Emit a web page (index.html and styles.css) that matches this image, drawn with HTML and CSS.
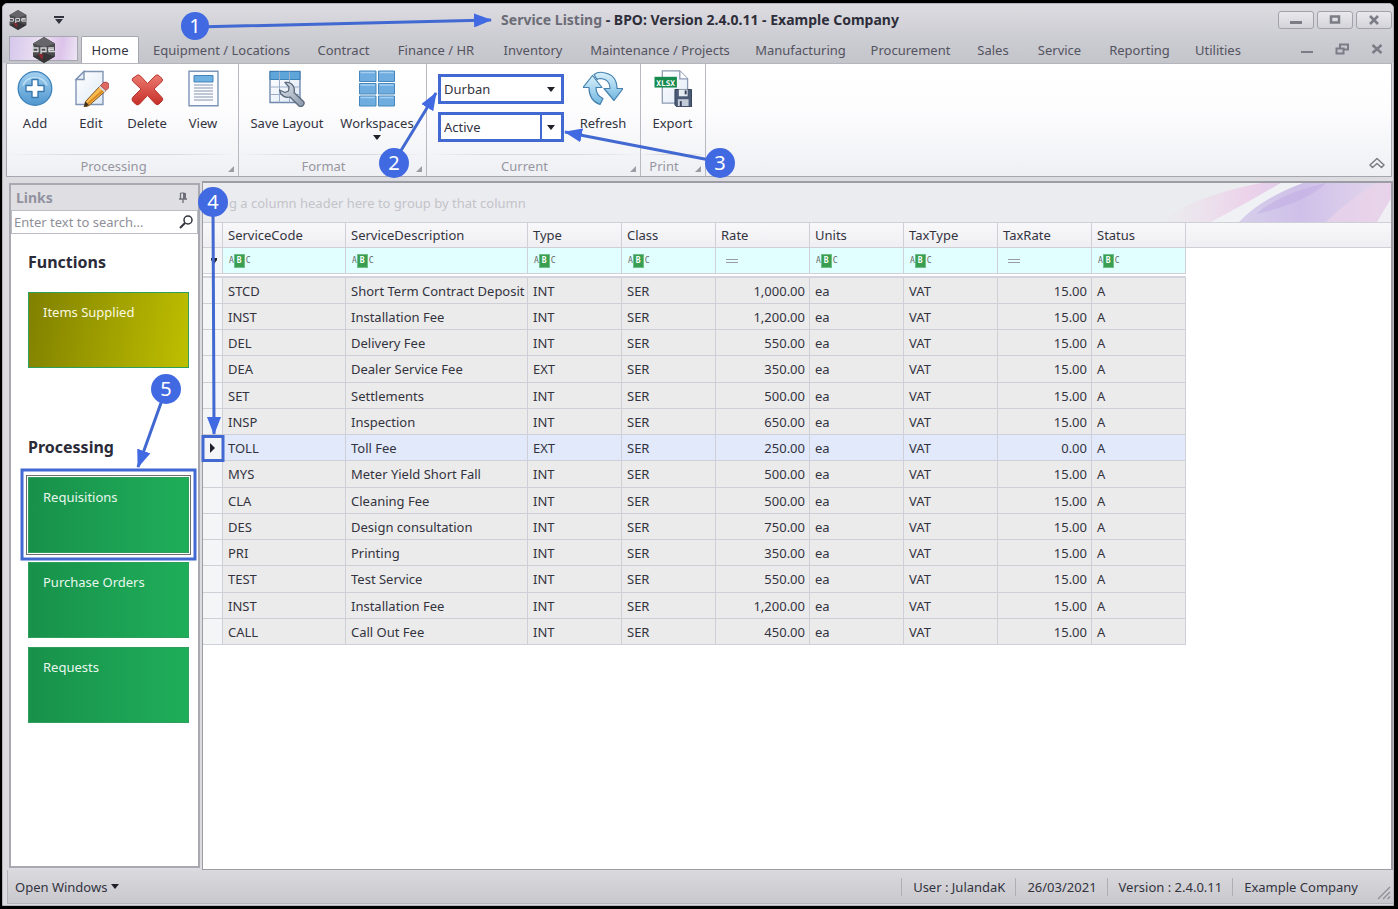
FILE: index.html
```html
<!DOCTYPE html>
<html lang="en">
<head>
<meta charset="utf-8">
<title>Service Listing - BPO</title>
<link rel="stylesheet" href="styles.css">
</head>
<body>
<svg class="defs" width="0" height="0" aria-hidden="true">
  <defs>
    <linearGradient id="blue" x1="0" y1="0" x2="0" y2="1"><stop offset="0" stop-color="#a3d0ef"/><stop offset="1" stop-color="#4f97cf"/></linearGradient>
    <linearGradient id="cyan" x1="0" y1="0" x2="0" y2="1"><stop offset="0" stop-color="#d9f0fb"/><stop offset="1" stop-color="#70b7e0"/></linearGradient>
    <linearGradient id="red" x1="0" y1="0" x2="0" y2="1"><stop offset="0" stop-color="#ec7a70"/><stop offset="1" stop-color="#c62f28"/></linearGradient>
    <linearGradient id="paper" x1="0" y1="0" x2="1" y2="1"><stop offset="0" stop-color="#ffffff"/><stop offset="1" stop-color="#dfe9f6"/></linearGradient>
    <linearGradient id="steel" x1="0" y1="0" x2="1" y2="1"><stop offset="0" stop-color="#e3e9ef"/><stop offset="1" stop-color="#8796a8"/></linearGradient>
    <symbol id="logo" viewBox="0 0 26 26">
      <path d="M13 0 24 6.500V19.500L13 26 2 19.500V6.500Z" fill="#4b4b4e"/>
      <path d="M13 0 24 6.500 13 10 2 6.500Z" fill="#66666a"/>
      <path d="M13 16 24 19.500 13 26 2 19.500Z" fill="#353538"/>
      <path d="M2 8.500v6M2 11h5v3.500H2M10 17v-6h5v3.500h-5M23 11h-5v3.500h6M17 12.700h6" fill="none" stroke="#d6d6da" stroke-width="1.300"/>
      <path d="M7 17l4 6 1.500-5.500z" fill="#8f2830"/>
    </symbol>
  </defs>
</svg>
<div class="window">
  <header class="titlebar">
    <div class="quick">
      <svg width="20" height="20"><use href="#logo"/></svg>
      <button class="plain" aria-label="Customize quick access"><svg width="10" height="8" viewBox="0 0 10 8"><path d="M0 0h10v2H0zM1 3h8L5 8z" fill="#33333f"/></svg></button>
    </div>
    <h1 class="title"><span>Service Listing</span> - BPO: Version 2.4.0.11 - Example Company</h1>
    <div class="caption-buttons">
      <button aria-label="Minimize"><svg width="12" height="10" viewBox="0 0 12 10"><path d="M0 6h12v3H0z" fill="#7c7c86"/></svg></button>
      <button aria-label="Maximize"><svg width="12" height="10" viewBox="0 0 12 10"><path d="M2 1.500h8v6H2z" fill="none" stroke="#7c7c86" stroke-width="2.500"/></svg></button>
      <button aria-label="Close"><svg width="12" height="10" viewBox="0 0 12 10"><path d="M2 1l8 8M10 1L2 9" stroke="#7c7c86" stroke-width="2.500"/></svg></button>
    </div>
  </header>

  <nav class="tabs">
    <button class="app-button" aria-label="Application menu"><svg width="26" height="26"><use href="#logo"/></svg></button>
    <div class="tab-list">
      <a class="tab active" href="#home">Home</a>
      <a class="tab" href="#equipment">Equipment / Locations</a>
      <a class="tab" href="#contract">Contract</a>
      <a class="tab" href="#finance">Finance / HR</a>
      <a class="tab" href="#inventory">Inventory</a>
      <a class="tab" href="#maintenance">Maintenance / Projects</a>
      <a class="tab" href="#manufacturing">Manufacturing</a>
      <a class="tab" href="#procurement">Procurement</a>
      <a class="tab" href="#sales">Sales</a>
      <a class="tab" href="#service">Service</a>
      <a class="tab" href="#reporting">Reporting</a>
      <a class="tab" href="#utilities">Utilities</a>
    </div>
    <div class="mdi-buttons">
      <button class="plain" aria-label="Minimize document"><svg width="14" height="12" viewBox="0 0 14 12"><path d="M1 8h12v2H1z" fill="#7c7c86"/></svg></button>
      <button class="plain" aria-label="Restore document"><svg width="14" height="12" viewBox="0 0 14 12"><path d="M5 5V1.500h8v5H9M1.500 5.500h7v5h-7z" fill="none" stroke="#7c7c86" stroke-width="2"/></svg></button>
      <button class="plain" aria-label="Close document"><svg width="14" height="12" viewBox="0 0 14 12"><path d="M2.500 2l9 8M11.500 2l-9 8" stroke="#7c7c86" stroke-width="2.500"/></svg></button>
    </div>
  </nav>

  <section class="ribbon">
    <div class="group processing">
      <div class="tools">
        <button class="tool"><svg width="36" height="36" viewBox="0 0 36 36"><circle cx="18" cy="18" r="16.800" fill="url(#blue)" stroke="#3f83bb" stroke-width="1.300"/><path d="M6 15a13 13 0 0 1 24 0" fill="none" stroke="#cdeafa" stroke-width="1.500" opacity=".7"/><path d="M15 9h6v6h6v6h-6v6h-6v-6H9v-6h6z" fill="#fff" stroke="#3778ae" stroke-width="1.400" stroke-linejoin="round"/></svg>Add</button>
        <button class="tool"><svg width="36" height="36" viewBox="0 0 36 36"><path d="M11 1h19v33H3V9z" fill="url(#paper)" stroke="#8095b4" stroke-width="1.400"/><path d="M11 1v8H3z" fill="#e8eff9" stroke="#8095b4" stroke-width="1.400"/><path d="M27.500 15 33 20 16 35 11 37 12.500 31z" fill="#f8bb4c" stroke="#80511c" stroke-width="1"/><path d="M31 19 15 33" fill="none" stroke="#d98722" stroke-width="1.800"/><path d="M12.500 31l3.500 3.500-5 2z" fill="#3b2f26"/><path d="M27.500 15l3-3q3-1.200 5 1 1.500 2 0 4.500L33 20z" fill="#df6a63" stroke="#a03a38" stroke-width=".8"/><path d="M26.500 16l5.500 5" stroke="#d5dae2" stroke-width="2"/></svg>Edit</button>
        <button class="tool"><svg width="36" height="36" viewBox="0 0 36 36"><path d="M8.500 4.500Q10 4 11.500 5.500L18.500 13 26 5.500q1.500-1.500 3-1l4 3.500q1 1.500 0 3L25 18.500l8 8.500q1.500 1.500 0 3.500l-3 3q-2 1.500-3.500 0L18.500 25l-8 8.500q-1.500 1.500-3.500.5l-3.500-3.500q-1-2 0-3.500l8.500-8.500L4 11q-1.500-1.500-.5-3z" fill="url(#red)" stroke="#b8332c"/></svg>Delete</button>
        <button class="tool"><svg width="36" height="36" viewBox="0 0 36 36"><path d="M4 0.700h29v34.600H4z" fill="#fafcff" stroke="#7e94b6" stroke-width="1.400"/><path d="M9 5h19v6.500H9z" fill="#6fb2e2" stroke="#4484b8"/><path d="M9 14.500h19M9 17.500h19M9 20.500h19M9 23.500h19M9 26.500h19M9 29.500h19" stroke="#8593ab" stroke-width="1.200"/></svg>View</button>
      </div>
      <div class="group-name">Processing</div>
    </div>
    <div class="group format">
      <div class="tools">
        <button class="tool wide"><svg width="36" height="36" viewBox="0 0 36 36"><path d="M1 1h30v31H1z" fill="url(#paper)" stroke="#7088ac" stroke-width="1.400"/><path d="M1 1h30v8H1z" fill="#5ea5da" stroke="#3d7fb7"/><path d="M10.500 1v31M20.500 1v31M1 16.500h30M1 24h30" stroke="#9badc8"/><path d="M16 12q6-1 8.500 4 1.500 3 .5 6l9.500 9q1.500 2-.5 4t-4 .5L21 26.500q-5 1.500-9-3l-1.500-4 5.500 2.500 3.500-1.500.5-4z" fill="url(#steel)" stroke="#59687b" stroke-width="1.300" stroke-linejoin="round"/></svg>Save Layout</button>
        <button class="tool medium"><svg width="36" height="36" viewBox="0 0 36 36"><path d="M.5.500h16.500v10.500H.5zM19.500.500h16v10.500h-16zM.5 13h16.500v10.500H.5zM19.500 13h16v10.500h-16zM.5 25.500h16.500v10H.5zM19.500 25.500h16v10h-16z" fill="#6fade0" stroke="#4688bd"/><path d="M1.500 2h14.500M20.500 2h14M1.500 14.500h14.500M20.500 14.500h14M1.500 27h14.500M20.500 27h14" stroke="#a5d0f0" stroke-width="1.500"/></svg>Workspaces<svg class="drop" width="8" height="5" viewBox="0 0 8 5"><path d="M0 0h8L4 5z" fill="#20202c"/></svg></button>
      </div>
      <div class="group-name">Format</div>
    </div>
    <div class="group current">
      <div class="tools">
        <div class="combos">
          <label class="combo"><select aria-label="Site"><option>Durban</option></select><svg width="8" height="5" viewBox="0 0 8 5"><path d="M0 0h8L4 5z" fill="#20202c"/></svg></label>
          <label class="combo split"><select aria-label="Status"><option>Active</option></select><svg width="8" height="5" viewBox="0 0 8 5"><path d="M0 0h8L4 5z" fill="#20202c"/></svg></label>
        </div>
        <button class="tool refresh"><svg width="40" height="36" viewBox="0 0 40 36"><path d="M6 17H0L9.500 5 19 17h-6q0 8 7 11l-3 6Q6 30 6 17z" fill="url(#cyan)" stroke="#4581ae" stroke-width="1.200" stroke-linejoin="round"/><path d="M34 18h6l-9 12-10-12h6q0-9-9-10-3 0-4 1l-3-5q4-3 9-2 14 2 14 16z" fill="url(#cyan)" stroke="#4581ae" stroke-width="1.200" stroke-linejoin="round"/></svg>Refresh</button>
      </div>
      <div class="group-name">Current</div>
    </div>
    <div class="group print">
      <div class="tools">
        <button class="tool"><svg width="40" height="38" viewBox="0 0 40 38"><path d="M9 1h18l8 8v25H9z" fill="url(#paper)" stroke="#8b9ab3" stroke-width="1.300"/><path d="M27 1v8h8" fill="#fff" stroke="#8b9ab3" stroke-width="1.300"/><path d="M1 7h23v11H1z" fill="#178a4e"/><text x="12.500" y="16" text-anchor="middle" class="xlsx">XLSX</text><path d="M22 20h17v18H24l-2-2z" fill="#4b5a75" stroke="#35425a"/><path d="M26 20h9v7h-9z" fill="#e7ebf2"/><path d="M32 21h2v4h-2z" fill="#35425a"/><path d="M25 30h11v7H25z" fill="#c5ccd9"/><path d="M27 32h2v5h-2z" fill="#35425a"/></svg>Export</button>
      </div>
      <div class="group-name">Print</div>
    </div>
    <button class="plain collapse" aria-label="Collapse ribbon"><svg width="16" height="12" viewBox="0 0 16 12"><path d="M1 8l7-6.500L15 8l-2.500 2.500L8 6.500l-4.500 4z" fill="none" stroke="#7c7c86" stroke-width="1.500" stroke-linejoin="round"/></svg></button>
  </section>

  <div class="workspace">
    <aside class="links">
      <div class="links-head"><h2>Links</h2><button class="plain" aria-label="Pin panel"><svg width="10" height="12" viewBox="0 0 10 12"><path d="M2.500 1v6M1 7h8M5 7v4" fill="none" stroke="#6e6e78" stroke-width="1.300"/><path d="M2.500 1h4v6" fill="none" stroke="#6e6e78"/><path d="M5 1h3v6H5z" fill="#6e6e78"/></svg></button></div>
      <div class="search"><input type="text" placeholder="Enter text to search..." aria-label="Search links"><svg width="14" height="14" viewBox="0 0 14 14"><circle cx="9" cy="5" r="4" fill="none" stroke="#33333f" stroke-width="1.500"/><path d="M6 8l-5 5" stroke="#33333f" stroke-width="2"/></svg></div>
      <div class="links-body">
        <h3>Functions</h3>
        <button class="tile olive">Items Supplied</button>
        <h3 class="second">Processing</h3>
        <button class="tile focused">Requisitions</button>
        <button class="tile">Purchase Orders</button>
        <button class="tile">Requests</button>
      </div>
    </aside>

    <main class="listing">
      <div class="group-panel">
        <span>Drag a column header here to group by that column</span>
        <svg class="swoosh" viewBox="0 0 240 40" preserveAspectRatio="none" aria-hidden="true">
          <defs>
            <linearGradient id="pink"><stop offset="0" stop-color="#eddcec" stop-opacity="0"/><stop offset=".7" stop-color="#ecd3ea"/><stop offset="1" stop-color="#e3cdea"/></linearGradient>
            <linearGradient id="violet"><stop offset="0" stop-color="#d6cfea"/><stop offset=".4" stop-color="#cfc0e9"/><stop offset="1" stop-color="#e4d8ec"/></linearGradient>
          </defs>
          <path d="M10 40Q40 14 110 0h20Q90 24 60 40z" fill="url(#pink)"/>
          <path d="M60 40Q100 18 130 0h22Q110 20 88 40z" fill="#f0f1f5"/>
          <path d="M88 40Q110 16 152 0h88v20L226 40z" fill="url(#violet)"/>
          <path d="M105 32Q130 10 175 0 155 20 105 32z" fill="#c2afe5" opacity=".6"/>
          <path d="M175 40Q200 15 226 0h14v20L226 40z" fill="#e8d2ea" opacity=".8"/>
          <path d="M226 40 240 16v24z" fill="#f0f0f4"/>
        </svg>
      </div>
      <div class="grid-wrap">
        <table class="grid">
          <colgroup><col class="c-mark"><col class="c-code"><col class="c-desc"><col class="c-std"><col class="c-std"><col class="c-std"><col class="c-std"><col class="c-std"><col class="c-std"><col class="c-last"><col></colgroup>
          <thead>
            <tr><th></th><th>ServiceCode</th><th>ServiceDescription</th><th>Type</th><th>Class</th><th>Rate</th><th>Units</th><th>TaxType</th><th>TaxRate</th><th>Status</th><th class="rest"></th></tr>
            <tr class="filter"><td class="mark"><svg width="8" height="8" viewBox="0 0 8 8"><path d="M1 1h6v2L4 7 1 3z" fill="#20202c"/></svg></td>
              <td><span class="abc">A<b>B</b>C</span></td><td><span class="abc">A<b>B</b>C</span></td><td><span class="abc">A<b>B</b>C</span></td><td><span class="abc">A<b>B</b>C</span></td><td><span class="eq"></span></td><td><span class="abc">A<b>B</b>C</span></td><td><span class="abc">A<b>B</b>C</span></td><td><span class="eq"></span></td><td><span class="abc">A<b>B</b>C</span></td><td class="rest"></td></tr>
            <tr class="divider"><td colspan="10"></td><td class="rest"></td></tr>
          </thead>
          <tbody>
            <tr><td></td><td>STCD</td><td>Short Term Contract Deposit</td><td>INT</td><td>SER</td><td>1,000.00</td><td>ea</td><td>VAT</td><td>15.00</td><td>A</td></tr>
            <tr><td></td><td>INST</td><td>Installation Fee</td><td>INT</td><td>SER</td><td>1,200.00</td><td>ea</td><td>VAT</td><td>15.00</td><td>A</td></tr>
            <tr><td></td><td>DEL</td><td>Delivery Fee</td><td>INT</td><td>SER</td><td>550.00</td><td>ea</td><td>VAT</td><td>15.00</td><td>A</td></tr>
            <tr><td></td><td>DEA</td><td>Dealer Service Fee</td><td>EXT</td><td>SER</td><td>350.00</td><td>ea</td><td>VAT</td><td>15.00</td><td>A</td></tr>
            <tr><td></td><td>SET</td><td>Settlements</td><td>INT</td><td>SER</td><td>500.00</td><td>ea</td><td>VAT</td><td>15.00</td><td>A</td></tr>
            <tr><td></td><td>INSP</td><td>Inspection</td><td>INT</td><td>SER</td><td>650.00</td><td>ea</td><td>VAT</td><td>15.00</td><td>A</td></tr>
            <tr class="selected"><td><svg width="5" height="10" viewBox="0 0 5 10"><path d="M0 0l5 5-5 5z" fill="#20202c"/></svg></td><td>TOLL</td><td>Toll Fee</td><td>EXT</td><td>SER</td><td>250.00</td><td>ea</td><td>VAT</td><td>0.00</td><td>A</td></tr>
            <tr><td></td><td>MYS</td><td>Meter Yield Short Fall</td><td>INT</td><td>SER</td><td>500.00</td><td>ea</td><td>VAT</td><td>15.00</td><td>A</td></tr>
            <tr><td></td><td>CLA</td><td>Cleaning Fee</td><td>INT</td><td>SER</td><td>500.00</td><td>ea</td><td>VAT</td><td>15.00</td><td>A</td></tr>
            <tr><td></td><td>DES</td><td>Design consultation</td><td>INT</td><td>SER</td><td>750.00</td><td>ea</td><td>VAT</td><td>15.00</td><td>A</td></tr>
            <tr><td></td><td>PRI</td><td>Printing</td><td>INT</td><td>SER</td><td>350.00</td><td>ea</td><td>VAT</td><td>15.00</td><td>A</td></tr>
            <tr><td></td><td>TEST</td><td>Test Service</td><td>INT</td><td>SER</td><td>550.00</td><td>ea</td><td>VAT</td><td>15.00</td><td>A</td></tr>
            <tr><td></td><td>INST</td><td>Installation Fee</td><td>INT</td><td>SER</td><td>1,200.00</td><td>ea</td><td>VAT</td><td>15.00</td><td>A</td></tr>
            <tr><td></td><td>CALL</td><td>Call Out Fee</td><td>INT</td><td>SER</td><td>450.00</td><td>ea</td><td>VAT</td><td>15.00</td><td>A</td></tr>
          </tbody>
        </table>
      </div>
    </main>
  </div>

  <footer class="status">
    <button class="plain open">Open Windows <svg width="8" height="5" viewBox="0 0 8 5"><path d="M0 0h8L4 5z" fill="#20202c"/></svg></button>
    <div class="status-items"><span>User : JulandaK</span><span>26/03/2021</span><span>Version : 2.4.0.11</span><span>Example Company</span></div>
    <svg class="grip" width="14" height="14" viewBox="0 0 14 14"><path d="M1 13 13 1M6 13l7-7M10.500 13l2.500-2.500" stroke="#8e8e98" stroke-width="1.300"/></svg>
  </footer>
</div>

<svg class="callouts" width="1398" height="909" viewBox="0 0 1398 909" aria-label="Callouts">
  <defs><marker id="head" markerUnits="userSpaceOnUse" markerWidth="18" markerHeight="14" refX="17" refY="7" orient="auto"><path d="M0 0 18 7 0 14z" fill="#4169e1"/></marker></defs>
  <g class="marks">
    <rect x="203" y="436.500" width="20" height="24"/>
    <rect x="22" y="470" width="173" height="89"/>
    <path d="M196 27 480 20.300M394 162 430 103M720 162 575 134M213 203 214 424M166 389 142 456"/>
    <path d="M480 20.300 491 20" marker-end="url(#head)"/>
    <path d="M430 103 436 93" marker-end="url(#head)"/>
    <path d="M575 134 565 132" marker-end="url(#head)"/>
    <path d="M214 424V434" marker-end="url(#head)"/>
    <path d="M142 456 138 467" marker-end="url(#head)"/>
  </g>
  <g class="dots"><circle cx="195" cy="26" r="14"/><circle cx="394" cy="163" r="15"/><circle cx="720" cy="163" r="15"/><circle cx="213" cy="202" r="15"/><circle cx="166" cy="389" r="15"/></g>
  <g class="nums"><text x="195" y="33">1</text><text x="394" y="170">2</text><text x="720" y="170">3</text><text x="213" y="209">4</text><text x="166" y="396">5</text></g>
</svg>
</body>
</html>
```
FILE: styles.css
```css
* { box-sizing: border-box; }
body {
  margin: 0;
  min-height: 100vh;
  padding: 3px 4px 3px 2px;
  background: #000;
  display: flex;
  font-family: "Noto Sans", "DejaVu Sans", sans-serif;
  font-size: 13px;
  line-height: 18px;
  color: #33333f;
}
button, input, select { font: inherit; color: inherit; margin: 0; padding: 0; }
svg { display: block; flex: none; }
h1, h2, h3 { margin: 0; }
.defs { position: absolute; }
.plain { border: 0; background: none; }

.window {
  flex: 1;
  min-width: 0;
  display: flex;
  flex-direction: column;
  background: #dcdce0;
  border: 1px solid #b4b4bc;
  border-radius: 5px 5px 0 0;
}

.titlebar {
  display: grid;
  grid-template-columns: 1fr auto 1fr;
  align-items: center;
  height: 31px;
  padding: 0 1px 0 5px;
  background: linear-gradient(#dcdce1, #cdcdd4);
  border-radius: 5px 5px 0 0;
}
.quick { display: flex; align-items: center; gap: 26px; }
.title { font-size: 14px; line-height: 18px; font-weight: 700; color: #2e2e3a; }
.title span { color: #6c6c76; }
.caption-buttons { display: flex; justify-content: flex-end; gap: 3px; }
.caption-buttons button {
  display: grid;
  place-items: center;
  width: 36px;
  height: 18px;
  border: 1px solid #a2a2ab;
  border-radius: 3px;
  background: linear-gradient(#e9e9ed, #d3d3d9);
}

.tabs {
  display: flex;
  align-items: flex-end;
  height: 28px;
  padding: 0 9px 0 6px;
  background: linear-gradient(#cdcdd4, #c4c4cb);
}
.app-button {
  display: grid;
  place-items: center;
  width: 69px;
  height: 25px;
  margin: 0 3px 2px 0;
  border: 1px solid #a6a6b0;
  background: linear-gradient(100deg, #d5c7ec, #ece0f2 45%, #dcc3ea 75%, #eee6f5);
}
.tab-list {
  display: grid;
  grid-template-columns: 58px 165px 79px 106px 88px 166px 115px 105px 60px 73px 87px 70px;
}
.tab { display: grid; place-items: center; height: 27px; color: #54545f; text-decoration: none; white-space: nowrap; }
.tab.active { background: #fff; color: #33333f; border: 1px solid #a6a6b0; border-bottom: 0; border-radius: 2px 2px 0 0; }
.mdi-buttons { display: flex; gap: 21px; margin: 0 0 8px auto; }

.ribbon {
  display: flex;
  margin: 0 1px 0 3px;
  border: 1px solid #a6a6ae;
  border-top-color: #b5b5bd;
  background: linear-gradient(#fff, #fdfdfe 40%, #eff0f4);
}
.group { display: flex; flex-direction: column; border-right: 1px solid #b9b9c2; }
.processing { width: 232px; }
.format { width: 188px; }
.current { width: 214px; }
.print { width: 65px; }
.tools { display: flex; height: 90px; padding-top: 6px; }
.group-name {
  position: relative;
  height: 22px;
  padding-right: 18px;
  text-align: center;
  line-height: 22px;
  color: #96969f;
  border-top: 1px solid;
  border-image: linear-gradient(90deg, transparent, #d8d8de 30%, #d8d8de 70%, transparent) 1;
}
.group-name::after {
  content: "";
  position: absolute;
  right: 4px;
  bottom: 4px;
  border: 3px solid;
  border-color: transparent #9c9ca5 #9c9ca5 transparent;
}
.tool {
  display: flex;
  flex-direction: column;
  align-items: center;
  width: 56px;
  border: 0;
  background: none;
  white-space: nowrap;
}
.tool > svg:first-child { height: 37px; margin-bottom: 7px; }
.wide { width: 96px; }
.medium { width: 84px; }
.refresh { width: 60px; }
.print .tool { width: 63px; }
.drop { margin-top: 3px; }
.xlsx { font: 700 8px "DejaVu Sans Mono", monospace; fill: #fff; }
.combos { display: flex; flex-direction: column; gap: 8px; padding-top: 4px; margin: 0 9px 0 11px; }
.combo {
  display: grid;
  grid-template-columns: 1fr 20px;
  align-items: center;
  width: 126px;
  height: 30px;
  border: 3px solid #4169d1;
  background: #fff;
}
.combo select {
  grid-area: 1 / 1 / 2 / 3;
  width: 100%;
  height: 24px;
  padding-left: 3px;
  border: 0;
  background: transparent;
  appearance: none;
}
.combo svg { grid-area: 1 / 2; justify-self: center; pointer-events: none; }
.split { background: linear-gradient(90deg, transparent 99px, #4169d1 99px, #4169d1 101px, transparent 101px) #fff; }
.collapse { margin: auto 6px 7px auto; }

.workspace { flex: 1; display: flex; gap: 2px; min-height: 0; padding: 4px 0 0 6px; }
.links {
  flex: none;
  display: flex;
  flex-direction: column;
  width: 191px;
  margin: 2px 0 2px;
  border: 2px solid #a9a9b1;
  background: #fff;
}
.links-head {
  display: flex;
  align-items: center;
  justify-content: space-between;
  height: 25px;
  padding: 0 10px 0 5px;
  background: #dfdfe3;
}
.links-head h2 { font-size: 14px; color: #9292a0; }
.search {
  display: flex;
  align-items: center;
  height: 24px;
  padding-right: 4px;
  border: 1px solid #bcbcc4;
}
.search input { flex: 1; min-width: 0; padding-left: 2px; border: 0; outline: 0; background: none; }
.search input::placeholder { color: #8f8f98; opacity: 1; }
.links-body { display: flex; flex-direction: column; gap: 9px; padding: 18px 9px 0 17px; }
.links-body h3 { margin-bottom: 11px; font-size: 16px; line-height: 20px; color: #2b2b37; }
.links-body .second { margin: 60px 0 11px; }
.tile {
  display: block;
  height: 76px;
  padding: 9px 14px 46px;
  border: 1px solid #2fa05c;
  background: linear-gradient(90deg, #18914a, #1fae5a);
  color: #e9f7ee;
  text-align: left;
}
.olive { background: linear-gradient(100deg, #808000, #bfbf00); color: #fbfbe0; }
.focused { outline: 1px solid #6e6e6e; outline-offset: 1px; }

.listing {
  flex: 1;
  min-width: 0;
  display: flex;
  flex-direction: column;
  border: 1px solid #9c9ca5;
  border-top-width: 2px;
  border-right-width: 2px;
  background: #fff;
}
.group-panel {
  position: relative;
  display: flex;
  align-items: center;
  height: 39px;
  padding-left: 4px;
  background: #ebecef;
  color: #c3c3ca;
}
.swoosh { position: absolute; top: 0; right: 0; width: 240px; height: 100%; }
.grid-wrap { overflow: hidden; }
.grid { width: 100%; border-collapse: separate; border-spacing: 0; table-layout: fixed; }
.c-mark { width: 20px; }
.c-code { width: 123px; }
.c-desc { width: 182px; }
.c-std, .c-last { width: 94px; }
.grid th, .grid td {
  height: 26px;
  padding: 0 5px;
  border-right: 1px solid #cfcfd8;
  border-bottom: 1px solid #cfcfd8;
  text-align: left;
  white-space: nowrap;
}
.grid td:nth-child(3) { padding-right: 2px; }
.grid th { font-weight: 400; border-top: 1px solid #cfcfd8; background: linear-gradient(#f8f8fa, #efeff3); }
.filter td { background: #e0fffe; }
.grid .rest { border-right: 0; }
.grid .filter .rest { background: #fff; border-bottom: 0; }
.grid .divider td { height: 4px; background: #fff; border: 0; border-bottom: 2px solid #d4d4da; }
.grid .divider .rest { border: 0; }
.grid tbody td { background: #ebebeb; }
.grid tbody tr:nth-child(4n) td { height: 27px; }
.grid tbody td:nth-child(6), .grid tbody td:nth-child(9) { text-align: right; padding-right: 4px; }
.grid tbody td:first-child, .grid .mark { padding: 0 0 0 7px; background: #f4f5f7; }
.grid tbody .selected td:not(:first-child) { background: #e1e9fb; }
.abc { display: flex; align-items: center; margin-left: 1px; font: 8px/12px "DejaVu Sans Mono", monospace; color: #666; }
.abc b { margin: 0 1px 0 0; padding: 0 2px; border: 1px solid #6cc088; background: #3a9e50; color: #fff; }
.eq { display: block; width: 12px; height: 4px; margin-left: 5px; border: solid #9a9aa6; border-width: 1px 0; }

.status {
  display: flex;
  align-items: center;
  height: 34px;
  margin: 0 0 1px 4px;
  padding-left: 7px;
  border: 1px solid #b4b4bc;
  border-width: 0 0 1px 1px;
  background: linear-gradient(#dadade, #c8c8cd);
}
.open { display: flex; align-items: center; gap: 4px; }
.status-items { display: flex; margin-left: auto; }
.status-items span { padding: 0 10px 0 11px; border-left: 1px solid #aeaeb6; }
.grip { align-self: flex-end; margin: 0 2px 3px 9px; }

.callouts { position: absolute; top: 0; left: 0; pointer-events: none; }
.marks { fill: none; stroke: #4169d1; stroke-width: 3; }
.dots { fill: #4169e1; }
.nums { fill: #fff; font-size: 20px; text-anchor: middle; }
```
